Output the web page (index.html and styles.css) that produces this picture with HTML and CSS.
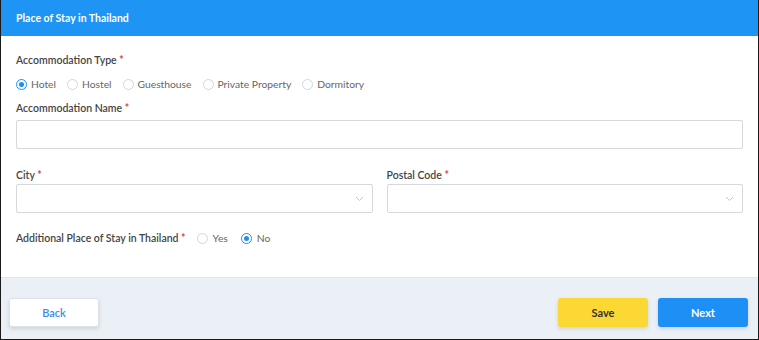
FILE: index.html
```html
<!DOCTYPE html>
<html lang="en">
<head>
    <meta charset="UTF-8">
    <meta name="viewport" content="width=device-width, initial-scale=1.0">
    <title>Place of Stay in Thailand</title>
    <link rel="stylesheet" href="styles.css">
</head>
<body>
    <div class="panel">
        <div class="panel-header">Place of Stay in Thailand</div>

        <div class="panel-body">
            <div class="field-label label-type">Accommodation Type <span class="req">*</span></div>
            <div class="radio-group">
                <label class="radio checked"><span class="dot"></span>Hotel</label>
                <label class="radio"><span class="dot"></span>Hostel</label>
                <label class="radio"><span class="dot"></span>Guesthouse</label>
                <label class="radio"><span class="dot"></span>Private Property</label>
                <label class="radio"><span class="dot"></span>Dormitory</label>
            </div>

            <div class="field-label label-name">Accommodation Name <span class="req">*</span></div>
            <div class="text-input"></div>

            <div class="two-cols">
                <div class="col">
                    <div class="field-label label-city">City <span class="req">*</span></div>
                    <div class="select">
                        <svg class="chevron" width="9" height="6" viewBox="0 0 9 6"><path d="M1 1 L4.5 4.5 L8 1" fill="none" stroke="#c4c8ce" stroke-width="1"/></svg>
                    </div>
                </div>
                <div class="col">
                    <div class="field-label label-city">Postal Code <span class="req">*</span></div>
                    <div class="select">
                        <svg class="chevron" width="9" height="6" viewBox="0 0 9 6"><path d="M1 1 L4.5 4.5 L8 1" fill="none" stroke="#c4c8ce" stroke-width="1"/></svg>
                    </div>
                </div>
            </div>

            <div class="inline-field">
                <span class="field-label">Additional Place of Stay in Thailand <span class="req">*</span></span>
                <label class="radio"><span class="dot"></span>Yes</label>
                <label class="radio checked"><span class="dot"></span>No</label>
            </div>
        </div>

        <div class="panel-footer">
            <button class="btn btn-back">Back</button>
            <div class="right-buttons">
                <button class="btn btn-save">Save</button>
                <button class="btn btn-next">Next</button>
            </div>
        </div>
    </div>
</body>
</html>
```

FILE: styles.css
```css
body {
    font-family: 'Lato', 'Noto Sans', sans-serif;
    margin: 0;
    padding: 0;
    background: #fff;
}
.panel {
    width: 757px;
    height: 339px;
    border: 1px solid #1a1a1a;
    border-top: none;
    display: flex;
    flex-direction: column;
    overflow: hidden;
}
.panel-header {
    background: #1e95f5;
    color: #fff;
    font-size: 10.5px;
    font-weight: bold;
    height: 36px;
    line-height: 36px;
    padding: 0 15px;
}
.panel-body {
    padding: 17px 15px 0;
    flex: 1;
}
.field-label {
    font-size: 10.5px;
    line-height: 14px;
    color: #444;
    font-weight: 600;
}
.req {
    color: #e8383d;
    font-weight: bold;
}
.radio-group {
    display: flex;
    gap: 11px;
    margin-top: 10px;
}
.radio {
    display: flex;
    align-items: center;
    gap: 4px;
    font-size: 10.3px;
    line-height: 14px;
    color: #666;
}
.dot {
    width: 9px;
    height: 9px;
    border: 1px solid #d3d6da;
    border-radius: 50%;
    box-sizing: content-box;
    position: relative;
}
.radio.checked .dot {
    border-color: #1e8ff0;
}
.radio.checked .dot::after {
    content: "";
    position: absolute;
    left: 2px;
    top: 2px;
    width: 5px;
    height: 5px;
    border-radius: 50%;
    background: #1e8ff0;
}
.label-name {
    margin-top: 10px;
}
.text-input {
    margin-top: 5px;
    height: 27px;
    border: 1px solid #d5d8dc;
    border-radius: 2px;
}
.two-cols {
    display: flex;
    gap: 14px;
    margin-top: 19px;
}
.col {
    flex: 1;
}
.select {
    margin-top: 2px;
    height: 27px;
    border: 1px solid #d5d8dc;
    border-radius: 2px;
    display: flex;
    align-items: center;
    justify-content: flex-end;
    padding-right: 8px;
}
.chevron {
    margin-top: 1px;
}
.inline-field {
    display: flex;
    align-items: center;
    gap: 11px;
    margin-top: 18px;
}
.inline-field .radio {
    gap: 5px;
}
.inline-field .radio + .radio {
    margin-left: 2px;
}
.panel-footer {
    background: #ebf0f6;
    border-top: 1px solid #e1e6ec;
    height: 62px;
    display: flex;
    justify-content: space-between;
    align-items: flex-start;
    padding: 20px 10px 0 8px;
    box-sizing: border-box;
}
.right-buttons {
    display: flex;
    gap: 10px;
}
.btn {
    width: 90px;
    height: 29px;
    border: none;
    border-radius: 3px;
    font-family: 'Lato', sans-serif;
    font-size: 11px;
    font-weight: bold;
    cursor: pointer;
    box-shadow: 0 2px 4px rgba(0, 0, 0, 0.12);
}
.btn-back {
    background: #fff;
    color: #3a8ee6;
    font-weight: 600;
    border: 1px solid #dde2e8;
}
.btn-save {
    background: #fcd835;
    color: #333;
}
.btn-next {
    background: #1e8ff5;
    color: #fff;
}
```
